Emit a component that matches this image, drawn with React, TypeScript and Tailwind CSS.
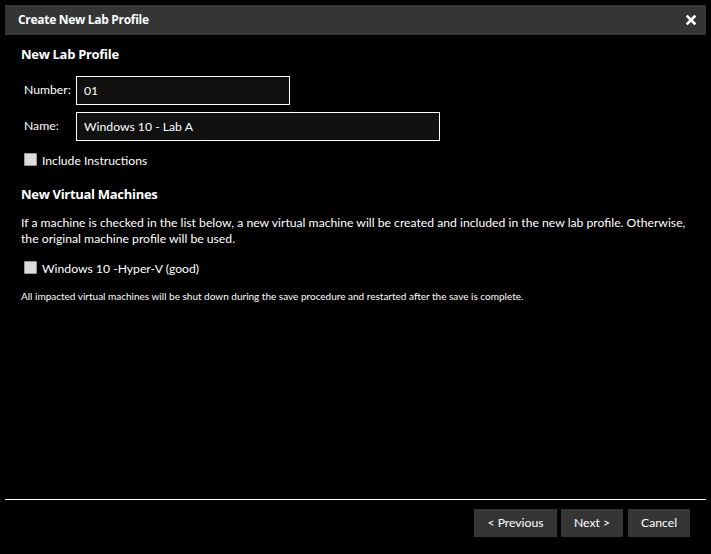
import React from "react";

const font = { fontFamily: '"Open Sans", "Noto Sans", Arial, sans-serif' };
const body = { fontFamily: 'Lato, "Open Sans", Arial, sans-serif' };

const Check = ({ label }: { label: string }) => (
  <label className="flex items-center gap-[5px] text-[12.2px] text-white" style={body}>
    <input
      type="checkbox"
      className="appearance-none w-[13px] h-[13px] bg-[#dcdcdc] border border-[#9a9a9a] rounded-[1px] -mt-[4px]"
    />
    <span>{label}</span>
  </label>
);

export default function App() {
  return (
    <div className="w-[711px] h-[554px] bg-black p-[5px] flex flex-col text-white" style={font}>
      {/* Title bar */}
      <div className="h-[30px] bg-[#353535] flex items-center justify-between pl-[13px] pr-[10px]">
        <span className="text-[12px] font-bold tracking-[-0.3px]">Create New Lab Profile</span>
        <svg width="10" height="10" viewBox="0 0 10 10">
          <path d="M1.5 1.5 L8.5 8.5 M8.5 1.5 L1.5 8.5" stroke="#fff" strokeWidth="2.6" strokeLinecap="square" />
        </svg>
      </div>

      <div className="px-[16px] flex flex-col">
        <h2 className="mt-[10px] h-[18px] leading-[18px] text-[13px] font-bold tracking-[-0.3px]">New Lab Profile</h2>

        <div className="mt-[13px] flex items-center pl-[3px] text-[12.2px]" style={body}>
          <span className="w-[52px]">Number:</span>
          <input
            defaultValue="01"
            className="w-[214px] h-[29px] bg-[#111] border border-white px-[7px] text-white outline-none"
          />
        </div>
        <div className="mt-[7px] flex items-center pl-[3px] text-[12.2px]" style={body}>
          <span className="w-[52px]">Name:</span>
          <input
            defaultValue="Windows 10 - Lab A"
            className="w-[364px] h-[29px] bg-[#111] border border-white px-[7px] text-white outline-none"
          />
        </div>

        <div className="mt-[11px] pl-[3px] h-[18px]">
          <Check label="Include Instructions" />
        </div>

        <h2 className="mt-[15px] h-[18px] leading-[18px] text-[13px] font-bold tracking-[-0.3px]">New Virtual Machines</h2>

        <p className="mt-[12px] text-[12.2px] leading-[16px]" style={body}>
          If a machine is checked in the list below, a new virtual machine will be created and included in the new lab profile. Otherwise,
          the original machine profile will be used.
        </p>

        <div className="mt-[13px] pl-[3px] h-[18px]">
          <Check label="Windows 10 -Hyper-V (good)" />
        </div>

        <p className="mt-[11px] text-[10px] leading-[14px]" style={body}>
          All impacted virtual machines will be shut down during the save procedure and restarted after the save is complete.
        </p>
      </div>

      <div className="mt-auto h-px bg-white" />
      <div className="flex justify-end gap-[4px] pt-[9px] pb-[12px] pr-[16px] text-[12.2px]" style={body}>
        <button className="w-[83px] h-[28px] bg-[#353535] text-white">&lt; Previous</button>
        <button className="w-[62px] h-[28px] bg-[#353535] text-white">Next &gt;</button>
        <button className="w-[62px] h-[28px] bg-[#353535] text-white ml-[1px]">Cancel</button>
      </div>
    </div>
  );
}
